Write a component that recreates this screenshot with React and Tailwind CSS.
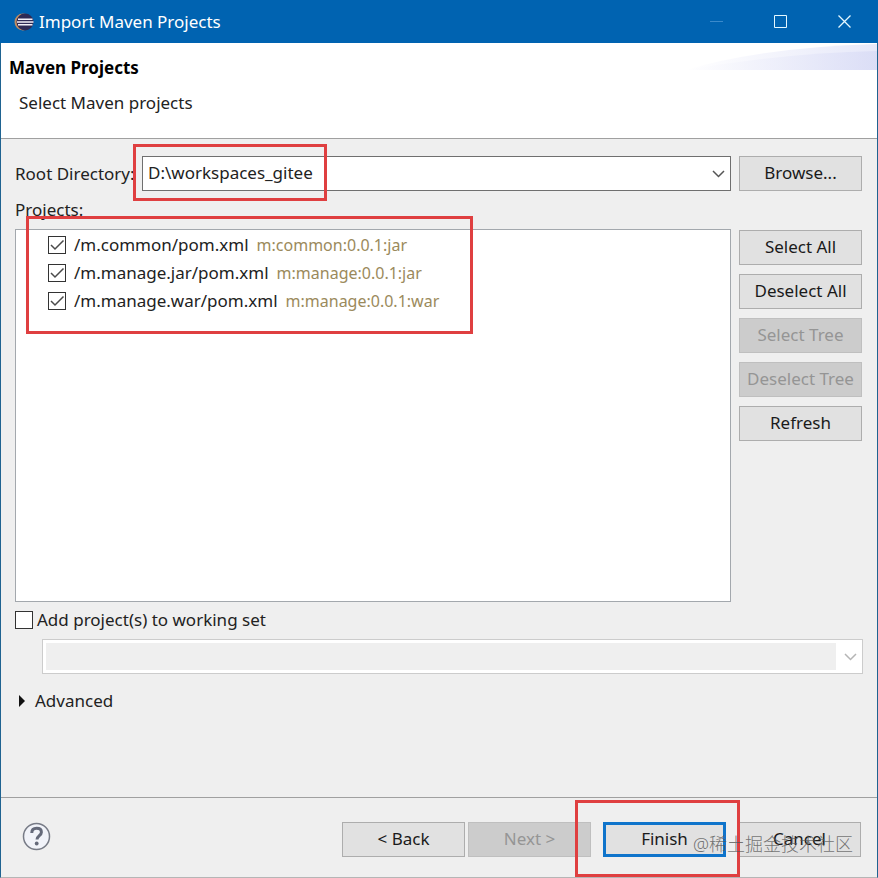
import React, { useState } from 'react';

const initialProjects = [
  { path: '/m.common/pom.xml', artifact: 'm:common:0.0.1:jar', checked: true },
  { path: '/m.manage.jar/pom.xml', artifact: 'm:manage:0.0.1:jar', checked: true },
  { path: '/m.manage.war/pom.xml', artifact: 'm:manage:0.0.1:war', checked: true },
];

const EclipseIcon = () => (
  <svg width="20" height="20" viewBox="0 0 20 20" aria-hidden="true">
    <circle cx="9" cy="10" r="8.500" fill="#c08d62" />
    <circle cx="11" cy="10" r="8.500" fill="#2f2a55" />
    <path d="M4 7.200h14.500M3 10h16.500M4 12.800h14.500" stroke="#f3f0f8" strokeWidth="1.600" />
  </svg>
);

const Chevron = ({ color }) => (
  <svg width="13" height="8" viewBox="0 0 13 8" fill="none" aria-hidden="true">
    <path d="M1 1l5.500 5.500L12 1" stroke={color} strokeWidth="1.500" />
  </svg>
);

const Checkbox = ({ id, checked, onChange }) => (
  <span className="grid h-[18px] w-[18px] shrink-0">
    <input
      id={id}
      type="checkbox"
      checked={checked}
      onChange={onChange}
      className="col-start-1 row-start-1 h-[18px] w-[18px] appearance-none border border-[#333333] bg-white"
    />
    {checked && (
      <svg className="pointer-events-none col-start-1 row-start-1" width="18" height="18" viewBox="0 0 18 18" fill="none" aria-hidden="true">
        <path d="M3 9l4 4 8.500-8.500" stroke="#4a4a4a" strokeWidth="1.500" />
      </svg>
    )}
  </span>
);

const DialogButton = ({ children, disabled, primary }) => {
  let look = 'border border-[#adadad] bg-[#e1e1e1] text-[#1a1a1a]';
  if (disabled) look = 'border border-[#bfbfbf] bg-[#cccccc] text-[#959595]';
  if (primary) look = 'border-3 border-[#0f74cb] bg-[#e1e1e1] text-[#1a1a1a]';
  return (
    <button type="button" disabled={disabled} className={`flex h-[35px] w-[123px] shrink-0 items-center justify-center pb-0.5 whitespace-pre ${look}`}>
      {children}
    </button>
  );
};

const App = () => {
  const [projects, setProjects] = useState(initialProjects);
  const [rootDir, setRootDir] = useState('D:\\workspaces_gitee');
  const [workingSet, setWorkingSet] = useState(false);

  const toggle = (path) => {
    setProjects((list) => list.map((p) => (p.path === path ? { ...p, checked: !p.checked } : p)));
  };

  return (
    <div className="flex min-h-screen flex-col border-x border-b border-x-[#1f6391] border-b-[#b5b5b5] bg-[#efefef] font-['Noto_Sans','Noto_Sans_CJK_SC',sans-serif] text-[17px] leading-6 text-[#222222]">
      {/* Title bar */}
      <header className="-mx-px flex h-[43px] items-center bg-[#0063b1] pr-[2px] pl-[14px] text-white">
        <EclipseIcon />
        <span className="ml-[5px] flex-1">Import Maven Projects</span>
        <button type="button" aria-label="Minimize" disabled className="flex h-full w-16 items-center justify-center">
          <svg width="13" height="13" viewBox="0 0 13 13"><path d="M0 6.500h13" stroke="#3b8acb" /></svg>
        </button>
        <button type="button" aria-label="Maximize" className="flex h-full w-16 items-center justify-center">
          <svg width="13" height="13" viewBox="0 0 13 13" fill="none"><path d="M.5.5h12v12H.5z" stroke="#e4f8ff" /></svg>
        </button>
        <button type="button" aria-label="Close" className="flex h-full w-16 items-center justify-center">
          <svg width="13" height="13" viewBox="0 0 13 13"><path d="M.5.5l12 12M12.500.5l-12 12" stroke="#e4f8ff" strokeWidth="1.300" /></svg>
        </button>
      </header>

      {/* Wizard heading */}
      <div className="flex h-24 justify-between border-b border-[#a0a0a0] bg-white">
        <div className="pt-[13px]">
          <h1 className="pl-2 font-bold text-black">Maven Projects</h1>
          <p className="mt-[11px] pl-[18px]">Select Maven projects</p>
        </div>
        <svg width="192" height="28" viewBox="0 0 192 28" aria-hidden="true">
          <defs>
            <linearGradient id="sweep" x1="0" x2="1" y1="0" y2="0">
              <stop offset="0" stopColor="#ffffff" />
              <stop offset="1" stopColor="#d6d9f5" />
            </linearGradient>
          </defs>
          <path d="M0 27Q80 4 192 1v26z" fill="url(#sweep)" opacity=".6" />
          <path d="M0 27Q100 10 192 8v19z" fill="url(#sweep)" opacity=".7" />
        </svg>
      </div>

      <main className="flex flex-1 flex-col pt-[17px] pr-[14px] pb-[84px] pl-[14px]">
        <div className="flex items-center gap-2 pr-px">
          <label htmlFor="root-dir" className="w-[119px] shrink-0 whitespace-nowrap">Root Directory:</label>
          <div className="relative flex h-[35px] flex-1 items-center border border-[#6f6f6f] bg-white">
            <input
              id="root-dir"
              value={rootDir}
              onChange={(e) => setRootDir(e.target.value)}
              className="h-full min-w-0 flex-1 pb-0.5 pl-[5px] outline-none"
            />
            <button type="button" aria-label="Show directories" className="px-[5px]">
              <Chevron color="#555555" />
            </button>
            <div className="pointer-events-none absolute -top-[13px] -left-[10px] h-[57px] w-[194px] border-3 border-[#df3f40]" />
          </div>
          <DialogButton>Browse...</DialogButton>
        </div>

        <h2 className="mt-[7px]">Projects:</h2>

        <div className="mt-[7px] flex flex-1 gap-2 pr-px">
          <div className="relative flex-1 border border-[#a3a8ad] bg-white pt-px pl-8">
            <ul>
              {projects.map((p) => (
                <li key={p.path} className="flex h-7 items-center gap-2">
                  <Checkbox id={p.path} checked={p.checked} onChange={() => toggle(p.path)} />
                  <label htmlFor={p.path} className="flex gap-2">
                    <span>{p.path}</span>
                    <span className="text-[16px] text-[#9b8a5c]">{p.artifact}</span>
                  </label>
                </li>
              ))}
            </ul>
            <div className="pointer-events-none absolute -top-[14px] left-[10px] h-[118px] w-[447px] border-3 border-[#df3f40]" />
          </div>
          <div className="flex flex-col gap-[9px] pt-px">
            <DialogButton>Select All</DialogButton>
            <DialogButton>Deselect All</DialogButton>
            <DialogButton disabled>Select Tree</DialogButton>
            <DialogButton disabled>Deselect Tree</DialogButton>
            <DialogButton>Refresh</DialogButton>
          </div>
        </div>

        <div className="mt-[6px] flex items-center gap-1">
          <Checkbox id="working-set" checked={workingSet} onChange={(e) => setWorkingSet(e.target.checked)} />
          <label htmlFor="working-set">Add project(s) to working set</label>
        </div>
        <div className="mt-[7px] ml-[27px] grid h-[35px] items-center border border-[#cccccc] bg-white p-[3px]">
          <select disabled aria-label="Working set" className="col-start-1 row-start-1 mr-[23px] h-full appearance-none bg-[#efefef]" />
          <span className="pointer-events-none col-start-1 row-start-1 justify-self-end pr-[2px]">
            <Chevron color="#b5b5b5" />
          </span>
        </div>

        <button type="button" className="mt-[15px] flex items-center gap-[10px] self-start pl-1">
          <svg width="6" height="12" viewBox="0 0 6 12" aria-hidden="true"><path d="M0 0l6 6-6 6z" fill="#111111" /></svg>
          Advanced
        </button>
      </main>

      <footer className="flex items-start border-t border-[#a0a0a0] pt-6 pr-4 pb-5 pl-[21px]">
        <button type="button" aria-label="Help" className="mr-auto">
          <svg width="29" height="29" viewBox="0 0 29 29" fill="none">
            <circle cx="14.500" cy="14.500" r="13" fill="#f1f3f9" stroke="#777b86" strokeWidth="1.500" />
            <path d="M9.800 11c0-3 2-4.700 4.800-4.700 2.900 0 4.800 1.500 4.800 3.900 0 3.300-4.400 3.500-4.400 7.300" stroke="#656a7a" strokeWidth="3" />
            <circle cx="14.700" cy="21.500" r="1.900" fill="#656a7a" />
          </svg>
        </button>
        <div className="flex gap-[3px]">
          <DialogButton>{'< Back'}</DialogButton>
          <DialogButton disabled>{'Next >'}</DialogButton>
        </div>
        <div className="relative ml-3 flex gap-3">
          <DialogButton primary>Finish</DialogButton>
          <DialogButton>Cancel</DialogButton>
          <div className="pointer-events-none absolute -top-[22px] -left-[28px] h-[77px] w-[165px] border-3 border-[#df3f40]" />
          <span className="pointer-events-none absolute top-[10px] right-2 text-[18px] font-light whitespace-nowrap text-[#555555]/80">@稀土掘金技术社区</span>
        </div>
      </footer>
    </div>
  );
};

export default App;
